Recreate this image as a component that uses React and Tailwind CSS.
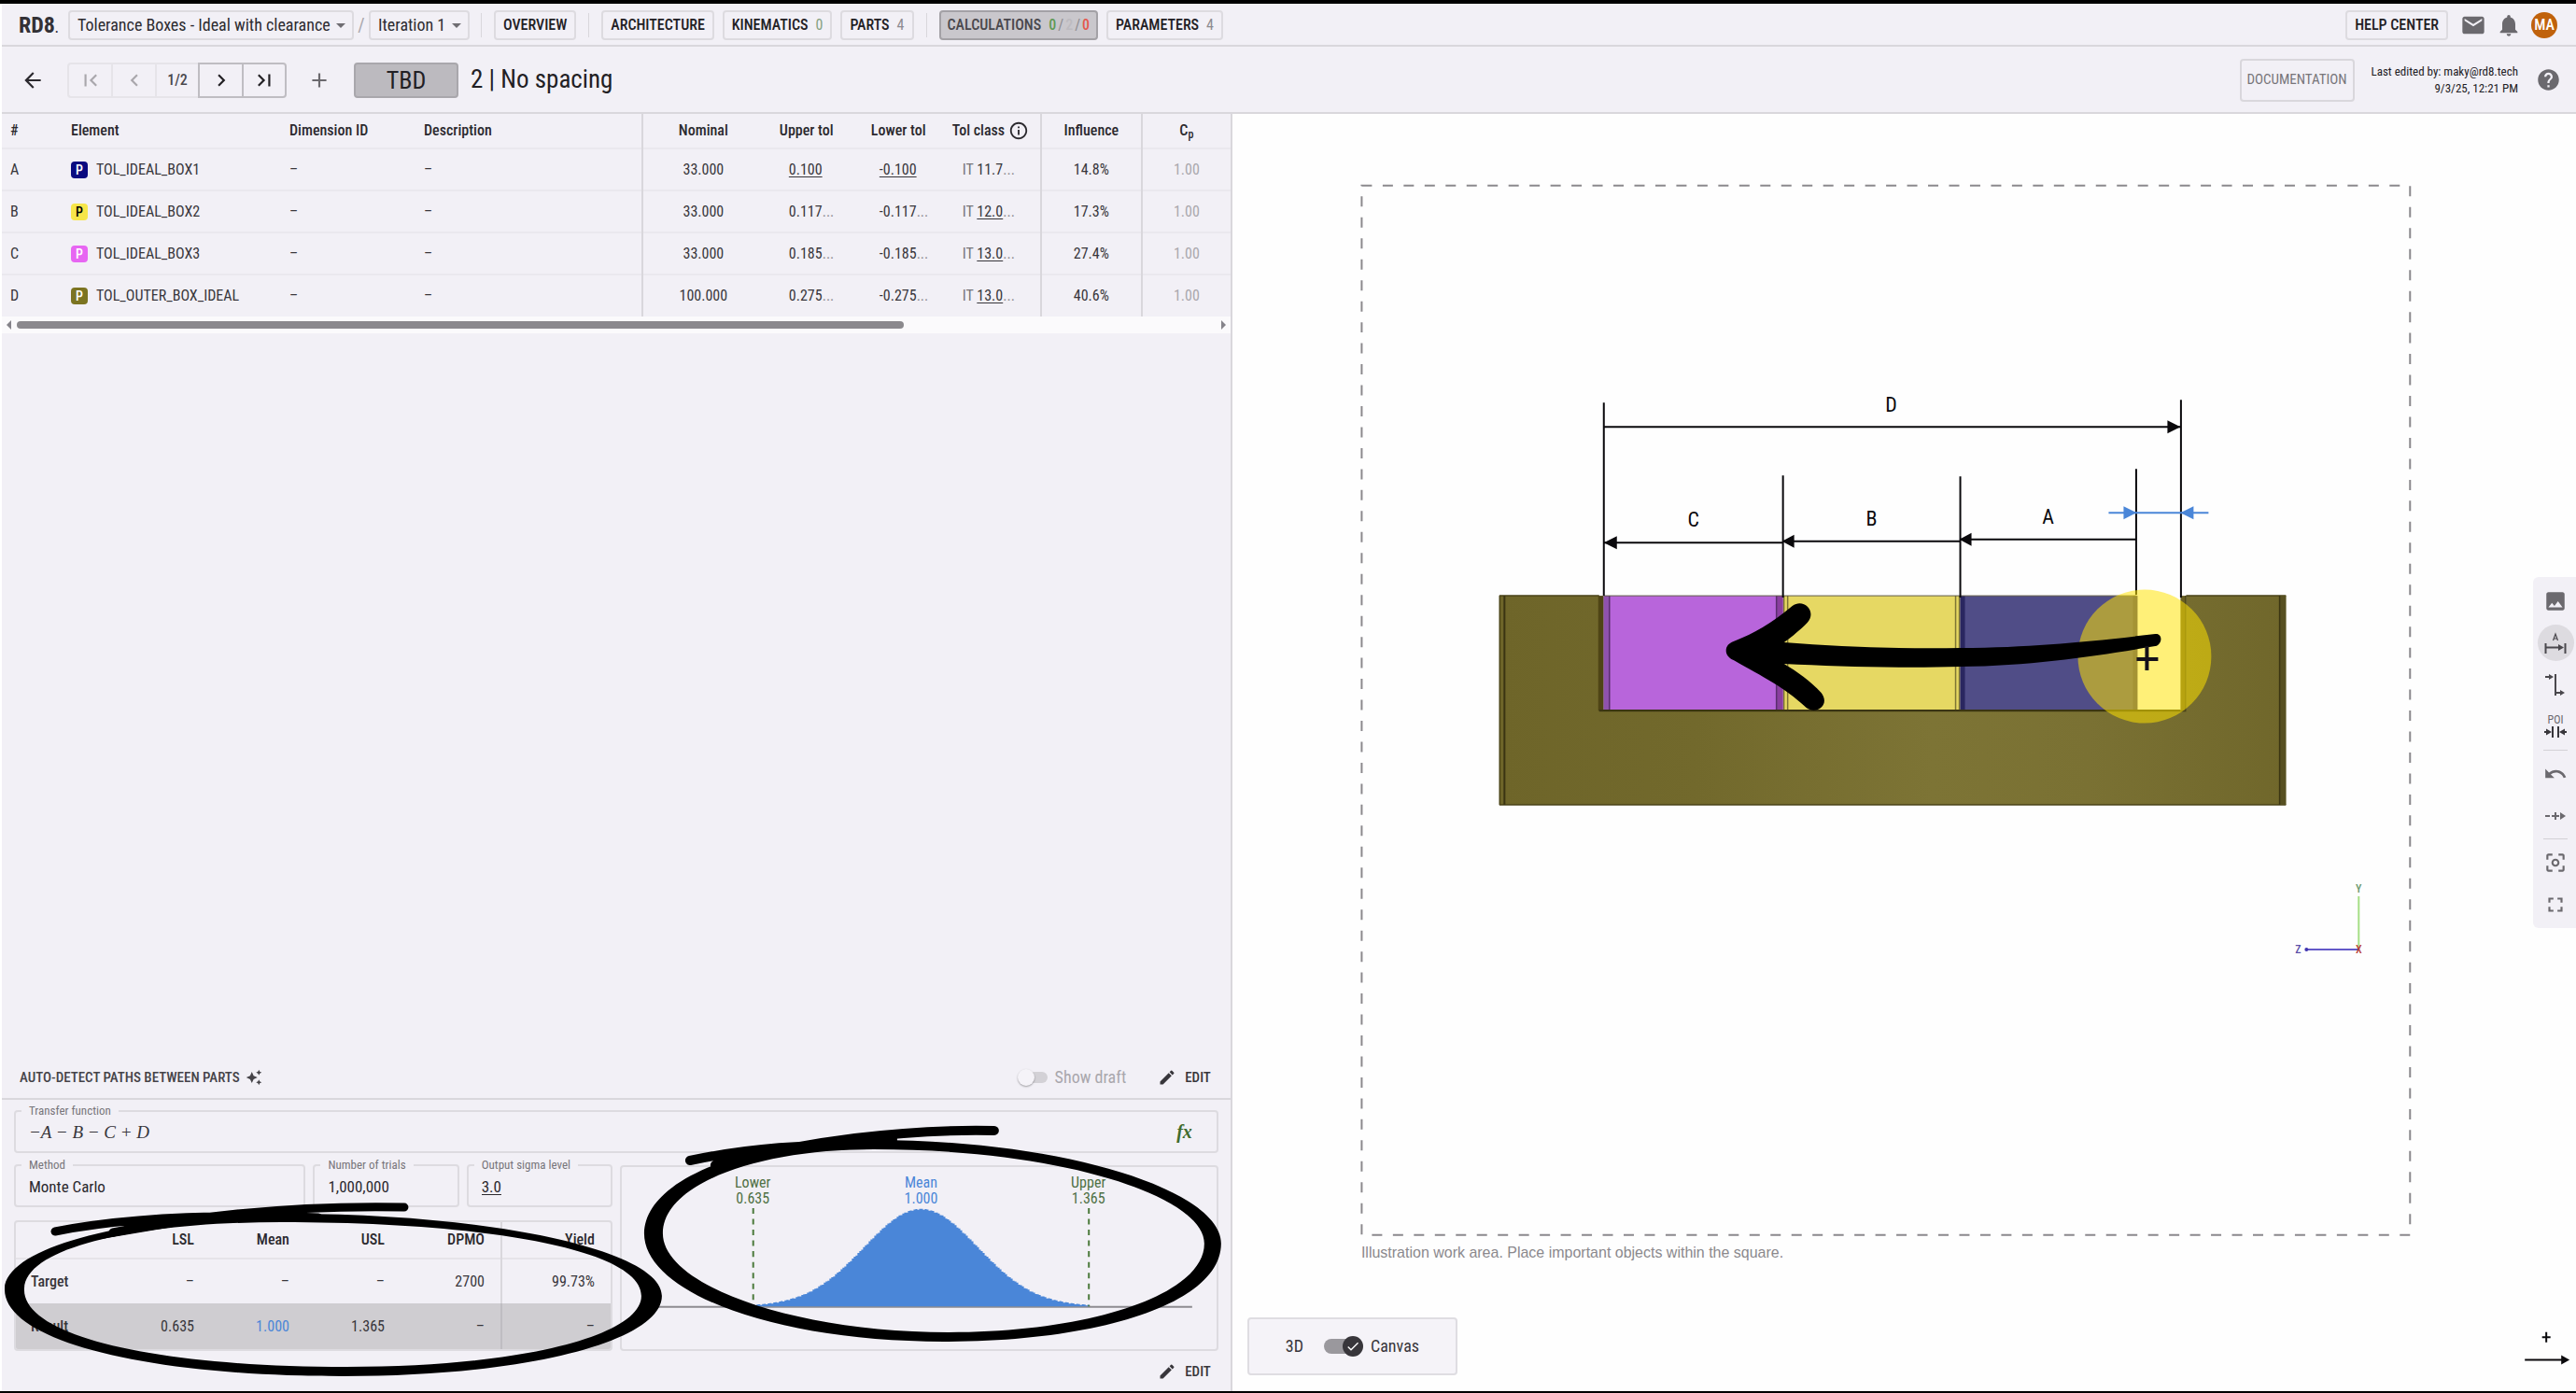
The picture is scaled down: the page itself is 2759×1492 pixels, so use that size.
import {
  MdAdd, MdArrowBack, MdArrowDropDown, MdArrowLeft, MdArrowRight, MdAutoAwesome, MdCenterFocusWeak, MdCheck, MdChevronLeft,
  MdChevronRight, MdEdit, MdEmail, MdFirstPage, MdFullscreen, MdHelp, MdImage, MdInfoOutline, MdLastPage, MdNotifications, MdUndo,
} from "react-icons/md";

const rows = [
  { id: "A", color: "bg-[#0b0b80] text-white", name: "TOL_IDEAL_BOX1", nominal: "33.000", upper: "0.100", lower: "-0.100", tol: "11.7", inf: "14.8%", manual: true },
  { id: "B", color: "bg-[#f7e64a] text-black", name: "TOL_IDEAL_BOX2", nominal: "33.000", upper: "0.117", lower: "-0.117", tol: "12.0", inf: "17.3%" },
  { id: "C", color: "bg-[#e766f2] text-white", name: "TOL_IDEAL_BOX3", nominal: "33.000", upper: "0.185", lower: "-0.185", tol: "13.0", inf: "27.4%" },
  { id: "D", color: "bg-[#7c7421] text-white", name: "TOL_OUTER_BOX_IDEAL", nominal: "100.000", upper: "0.275", lower: "-0.275", tol: "13.0", inf: "40.6%" },
];

function Divider() {
  return <span className="mx-1 h-[26px] w-px bg-[#d9d7dc]" />;
}

function NavButton({ children, active }) {
  return (
    <button
      className={
        active
          ? "flex h-8 items-center gap-2 whitespace-nowrap rounded border-2 border-[#a3a1a6] bg-[#c9c7cc] px-[7px] font-medium text-[#4a484d]"
          : "flex h-8 items-center gap-2 whitespace-nowrap rounded border-2 border-[#dddbe0] px-2 font-medium text-[#222024]"
      }
    >
      {children}
    </button>
  );
}

function Dropdown({ label, options, className }) {
  return (
    <div className={`relative flex h-8 items-center rounded border-2 border-[#dddbe0] text-[#2d2b30] ${className}`}>
      <select aria-label={label} className="h-full w-full appearance-none bg-transparent pl-2 text-lg leading-none outline-none">
        {options.map((o) => <option key={o}>{o}</option>)}
      </select>
      <MdArrowDropDown className="pointer-events-none absolute right-0 text-[24px] text-[#6f6d72]" />
    </div>
  );
}

function TopBar() {
  return (
    <header className="flex h-[46px] shrink-0 items-center border-b-2 border-[#d9d7dc] bg-[#f2f0f6] pt-px pr-5 pl-[18px] text-base">
      <a href="#home" className="w-[53px] text-2xl font-bold text-[#333136]">RD8<span className="text-xs">.</span></a>
      <Dropdown label="Project" options={["Tolerance Boxes - Ideal with clearance"]} className="w-[306px]" />
      <span className="w-4 text-center text-xl text-[#a9a7ac]">/</span>
      <Dropdown label="Iteration" options={["Iteration 1"]} className="w-[108px]" />
      <nav className="ml-2 flex items-center gap-[9px]">
        <Divider />
        <NavButton>OVERVIEW</NavButton>
        <Divider />
        <NavButton>ARCHITECTURE</NavButton>
        <NavButton>KINEMATICS <span className="font-normal text-[#86a081]">0</span></NavButton>
        <NavButton>PARTS <span className="font-normal text-[#8d8b90]">4</span></NavButton>
        <Divider />
        <NavButton active>
          CALCULATIONS
          <span className="flex gap-[2px]">
            <span className="text-[#5f9a55]">0</span><span className="font-normal text-[#8d8b90]">/</span>
            <span className="text-[#bdbbc0]">2</span><span className="font-normal text-[#8d8b90]">/</span>
            <span className="text-[#e4584e]">0</span>
          </span>
        </NavButton>
        <NavButton>PARAMETERS <span className="font-normal text-[#8d8b90]">4</span></NavButton>
      </nav>
      <div className="ml-auto flex items-center">
        <NavButton>HELP CENTER</NavButton>
        <button aria-label="Messages" className="ml-[13px] text-[28px] text-[#6b696e]"><MdEmail /></button>
        <button aria-label="Notifications" className="ml-[10px] text-[28px] text-[#6b696e]"><MdNotifications /></button>
        <button className="ml-[10px] size-7 rounded-full bg-[#c0620c] text-base font-medium text-white">MA</button>
      </div>
    </header>
  );
}

function Toolbar() {
  return (
    <div className="flex h-[72px] shrink-0 items-center border-b-2 border-[#d9d7dc] bg-[#f2f0f6] pt-px pr-4 pl-5">
      <button aria-label="Back" className="text-[26px] text-[#2b292e]"><MdArrowBack /></button>
      <div className="ml-6 flex h-[38px] items-stretch text-[26px] text-[#a9a7ac]">
        <button aria-label="First" disabled className="flex w-[47px] items-center justify-center rounded-l border-2 border-r-0 border-[#e6e4e9]"><MdFirstPage /></button>
        <button aria-label="Previous" disabled className="flex w-[47px] items-center justify-center border-2 border-r-0 border-[#e6e4e9]"><MdChevronLeft /></button>
        <span className="flex w-[46px] items-center justify-center border-2 border-r-0 border-[#e6e4e9] text-base font-medium text-[#4a484d]">1/2</span>
        <button aria-label="Next" className="flex w-[47px] items-center justify-center border-2 border-r-0 border-[#bfbdc2] text-[#222024]"><MdChevronRight /></button>
        <button aria-label="Last" className="flex w-[48px] items-center justify-center rounded-r border-2 border-[#bfbdc2] text-[#222024]"><MdLastPage /></button>
      </div>
      <button aria-label="Add" className="ml-[22px] text-[26px] text-[#6b696e]"><MdAdd /></button>
      <button className="ml-6 h-[38px] w-[112px] rounded border-2 border-[#a9a7ac] bg-[#bcbabf] text-[26px] leading-none text-[#222024]">TBD</button>
      <h1 className="ml-[13px] text-[27px] text-[#222024]">2 | No spacing</h1>
      <button className="ml-auto h-[46px] w-[123px] rounded border-2 border-[#d9d7dc] text-[15px] text-[#77757a]">DOCUMENTATION</button>
      <p className="ml-[18px] text-right text-[13px] leading-[18px] text-[#222024]">Last edited by: maky@rd8.tech<br />9/3/25, 12:21 PM</p>
      <button aria-label="Help" className="ml-[19px] text-[27px] text-[#6b696e]"><MdHelp /></button>
    </div>
  );
}

function Ellipsis() {
  return <span className="text-[#8d8b90]">...</span>;
}

function ElementsTable() {
  return (
    <table className="w-full table-fixed border-collapse text-base text-[#38363b]">
      <colgroup>
        <col className="w-[74px]" /><col className="w-[234px]" /><col className="w-[144px]" /><col /><col className="w-[130px]" />
        <col className="w-[97px]" /><col className="w-[94px]" /><col className="w-[106px]" /><col className="w-[108px]" /><col className="w-[95px]" />
      </colgroup>
      <thead>
        <tr className="h-[37px] border-b-2 border-[#eae8ee] text-left text-[#2b292e] [&>th]:font-medium">
          <th className="pl-[9px]">#</th><th>Element</th><th>Dimension ID</th><th>Description</th>
          <th className="border-l-2 border-[#d9d7dc] text-center">Nominal</th>
          <th className="pl-[17px]">Upper tol</th><th className="pl-[18px]">Lower tol</th>
          <th className="pl-[11px]"><span className="flex items-center gap-1 whitespace-nowrap">Tol class <MdInfoOutline className="text-[22px]" /></span></th>
          <th className="border-x-2 border-[#d9d7dc] text-center">Influence</th>
          <th className="text-center">C<sub>p</sub></th>
        </tr>
      </thead>
      <tbody>
        {rows.map((r) => (
          <tr key={r.id} className="h-[45px] border-b-2 border-[#eae8ee] last:border-b-0">
            <td className="pl-[9px]">{r.id}</td>
            <td>
              <span className="flex items-center gap-[9px]">
                <span className={`flex h-[18px] w-[18px] items-center justify-center rounded text-sm font-medium ${r.color}`}>P</span>{r.name}
              </span>
            </td>
            <td>–</td><td>–</td>
            <td className="border-l-2 border-[#d9d7dc] text-center">{r.nominal}</td>
            <td className="pl-[27px]">{r.manual ? <u className="underline-offset-2">{r.upper}</u> : <>{r.upper}<Ellipsis /></>}</td>
            <td className="pl-[27px]">{r.manual ? <u className="underline-offset-2">{r.lower}</u> : <>{r.lower}<Ellipsis /></>}</td>
            <td className="pl-[22px]">
              <span className="text-[#77757a]">IT </span>{r.manual ? r.tol : <u className="underline-offset-2">{r.tol}</u>}<Ellipsis />
            </td>
            <td className="border-x-2 border-[#d9d7dc] text-center">{r.inf}</td>
            <td className="text-center text-[#a9a7ac]">1.00</td>
          </tr>
        ))}
      </tbody>
    </table>
  );
}

function ScrollBar() {
  return (
    <div className="flex h-[18px] items-center bg-[#fbfafc] text-[#85838a]">
      <MdArrowLeft className="-mx-1 shrink-0 text-2xl" />
      <div className="flex-1"><div className="h-2 w-[74%] rounded-full bg-[#8b898d]" /></div>
      <MdArrowRight className="-mx-1 shrink-0 text-2xl" />
    </div>
  );
}

function Field({ id, label, value, className }) {
  return (
    <fieldset className="min-w-0 rounded border-2 border-[#dddbe0] px-[6px]">
      <legend className="px-2 text-[13px] leading-4 text-[#77757a]"><label htmlFor={id}>{label}</label></legend>
      <input id={id} readOnly value={value} className={`mb-[5px] block h-[30px] w-full bg-transparent px-2 outline-none ${className}`} />
    </fieldset>
  );
}

function ResultsTable() {
  return (
    <div className="mt-[14px] overflow-hidden rounded border-2 border-[#dddbe0]">
      <table className="w-full table-fixed border-collapse text-base text-[#38363b] [&_td]:text-right [&_th]:text-right [&_th]:font-medium">
        <colgroup>
          <col /><col className="w-[102px]" /><col className="w-[102px]" /><col className="w-[102px]" /><col className="w-[108px]" /><col className="w-[117px]" />
        </colgroup>
        <thead>
          <tr className="h-[39px] border-b-2 border-[#e6e4e9] text-[#2b292e] [&>th]:pr-[17px]">
            <th /><th>LSL</th><th>Mean</th><th>USL</th><th>DPMO</th><th className="border-l-2 border-[#d9d7dc]">Yield</th>
          </tr>
        </thead>
        <tbody className="[&_td]:pr-[17px]">
          <tr className="h-12">
            <th className="pl-4 text-left!">Target</th><td>–</td><td>–</td><td>–</td><td>2700</td><td className="border-l-2 border-[#d9d7dc]">99.73%</td>
          </tr>
          <tr className="h-[49px] bg-[#cfcdd1]">
            <th className="pl-4 text-left!">Result</th><td>0.635</td><td className="text-[#4a86d8]">1.000</td><td>1.365</td><td>–</td>
            <td className="border-l-2 border-[#bfbdc2]">–</td>
          </tr>
        </tbody>
      </table>
    </div>
  );
}

function bell() {
  let d = "M142 151";
  for (let x = 142; x < 502; x += 2) {
    const z = (x + 1 - 322) / 61;
    const y = 151 - 104 * Math.exp((-z * z) / 2) + (x % 3 === 0 ? 0.5 : -0.3);
    d += `V${y.toFixed(1)}H${x + 2}`;
  }
  return d + "V151Z";
}

function Histogram() {
  return (
    <div className="mt-2 rounded border-2 border-[#dddbe0]">
      <svg viewBox="2 2 636 194" className="block w-full text-base" role="img" aria-label="Result distribution">
        <path d="M28 151.500H612" stroke="#8d8b90" strokeWidth="2" />
        <path d={bell()} fill="#4a86d8" />
        <path d="M142.500 46V151M501.500 46V151" stroke="#4c7a3c" strokeWidth="2" strokeDasharray="6 5.500" />
        <g textAnchor="middle" fill="#4f7044">
          <text x="142" y="24">Lower</text><text x="142" y="41">0.635</text>
          <text x="501" y="24">Upper</text><text x="501" y="41">1.365</text>
        </g>
        <g textAnchor="middle" fill="#4a86d8"><text x="322" y="24">Mean</text><text x="322" y="41">1.000</text></g>
      </svg>
    </div>
  );
}

/* Hand-drawn highlight loops over the results table and the histogram. */
function Scribbles() {
  return (
    <svg viewBox="1 1178 1316 312" className="pointer-events-none absolute inset-0 h-full w-full overflow-visible" aria-hidden="true">
      <path fillRule="evenodd" d="M4 1380C6 1335 140 1301 310 1300C520 1300 708 1338 708 1388C708 1435 570 1474 366 1474C150 1474 2 1435 4 1380ZM25 1380C27 1335 150 1309 300 1309C520 1309 686 1338 686 1388C686 1430 560 1464 370 1464C160 1464 22 1430 25 1380Z" />
      <path d="M432 1293C330 1291 220 1300 120 1320M58 1319C130 1305 230 1300 340 1304" fill="none" stroke="#000" strokeWidth="9" strokeLinecap="round" />
      <path d="M90 1330C140 1310 230 1297 316 1293V1305L220 1308Z" />
      <path fillRule="evenodd" d="M689 1321C690 1262 800 1221 935 1221C1140 1221 1307 1275 1307 1332C1307 1395 1180 1437 1010 1437C830 1437 689 1385 689 1321ZM709 1321C709 1377 850 1427 1015 1427C1170 1427 1289 1386 1289 1332C1289 1282 1140 1231 935 1231C810 1231 709 1268 709 1321Z" />
      <path d="M1064 1211C970 1209 860 1222 765 1248M738 1243C800 1230 860 1225 950 1226" fill="none" stroke="#000" strokeWidth="10" strokeLinecap="round" />
      <path d="M740 1262C790 1236 880 1219 960 1213V1227L850 1234Z" />
    </svg>
  );
}

function EditButton() {
  return (
    <button className="flex items-center gap-[9px] text-[15px] font-medium text-[#38363b]"><MdEdit className="text-xl" />EDIT</button>
  );
}

function LeftPanel() {
  return (
    <section className="flex w-[47.8%] shrink-0 flex-col border-r-2 border-[#d9d7dc] bg-[#f2f0f6]">
      <ElementsTable />
      <ScrollBar />
      <div className="mt-auto flex h-[48px] items-center border-b-2 border-[#d9d7dc] pt-[2px] pr-[21px] pl-[19px]">
        <button className="flex items-center gap-[6px] text-[15px] font-medium text-[#454348]">
          AUTO-DETECT PATHS BETWEEN PARTS <MdAutoAwesome className="text-lg" />
        </button>
        <label className="ml-auto flex items-center gap-2 text-lg text-[#a9a7ac]">
          <input type="checkbox" role="switch" className="peer sr-only" />
          <span className="relative flex h-4 w-8 items-center justify-end">
            <span className="h-3 w-5 rounded-full bg-[#d3d1d6]" />
            <span className="absolute left-0 size-[18px] rounded-full bg-[#f5f3f8] shadow-[0_1px_2px_rgba(0,0,0,0.35)]" />
          </span>
          Show draft
        </label>
        <div className="ml-[34px]"><EditButton /></div>
      </div>
      <div className="relative h-[312px] pt-1 pr-[13px] pl-[13px]">
        <div className="relative">
          <Field id="transfer" label="Transfer function" value="−A − B − C + D" className="font-['Liberation_Serif',serif] text-[19px] text-[#38363b] italic" />
          <span className="absolute top-[18px] right-7 font-['Liberation_Serif',serif] text-xl leading-6 font-bold text-[#3f6b2c] italic">fx</span>
        </div>
        <div className="mt-[5px] grid grid-cols-2 gap-2">
          <div>
            <div className="grid grid-cols-[2fr_1fr_1fr] gap-2">
              <Field id="method" label="Method" value="Monte Carlo" className="text-[17px] text-[#2b292e]" />
              <Field id="trials" label="Number of trials" value="1,000,000" className="text-[17px] text-[#2b292e]" />
              <Field id="sigma" label="Output sigma level" value="3.0" className="text-[17px] leading-[30px] text-[#2b292e] underline underline-offset-2" />
            </div>
            <ResultsTable />
          </div>
          <Histogram />
        </div>
        <div className="flex h-11 items-center justify-end pr-2"><EditButton /></div>
        <Scribbles />
      </div>
    </section>
  );
}

function Drawing() {
  return (
    <svg viewBox="1320 122 1440 1368" className="absolute inset-0 h-full w-full" role="img" aria-label="Tolerance chain drawing">
      <defs>
        <linearGradient id="olive" x1="0" x2="1" y1="0" y2="0">
          <stop offset="0" stopColor="#6e6529" /><stop offset="0.25" stopColor="#72692c" /><stop offset="0.55" stopColor="#7d7435" /><stop offset="0.75" stopColor="#7a7133" /><stop offset="1" stopColor="#70672b" />
        </linearGradient>
      </defs>
      <rect x="1458.500" y="198.500" width="1123.500" height="1124.500" fill="none" stroke="#8b898d" strokeWidth="2" strokeDasharray="11 11.480" />
      <text x="1458" y="1347" fontSize="16" fill="#8b898d" className="font-['Liberation_Sans',sans-serif]">Illustration work area. Place important objects within the square.</text>

      {/* outer box and the three inner boxes */}
      <path d="M1606 638H1713V761H2342V638H2449V862H1606Z" fill="url(#olive)" />
      <path d="M1606 638H1713M2342 638H2449M1606 862H2449M1606.500 638V862M1713 761.500H2342" fill="none" stroke="#4a4318" strokeWidth="1.500" />
      <path d="M1611.500 638V862M2442.500 638V862" stroke="#3b3512" strokeWidth="2" />
      <rect x="2443" y="638" width="6" height="224" fill="#575021" />
      <rect x="1712" y="638" width="6" height="123" fill="#4e4415" />
      <rect x="2336" y="638" width="6" height="123" fill="#665d22" />
      <path d="M2341.500 638V761" stroke="#4a4318" strokeWidth="1.500" />
      <rect x="1718" y="638" width="192" height="123" fill="#b865db" />
      <rect x="1718" y="638" width="6" height="123" fill="#8f52ad" />
      <rect x="1903" y="638" width="7" height="123" fill="#8a3f9f" />
      <path d="M1724 638V761M1903 638V761" stroke="#5a2f6e" strokeWidth="1.500" />
      <rect x="1911" y="638" width="189" height="123" fill="#e6d863" />
      <path d="M1911 638V761M1915 638V761M2095 638V761M2099 638V761" stroke="#7d7434" strokeWidth="1.500" />
      <rect x="2100" y="638" width="189" height="123" fill="#504d87" />
      <rect x="2100" y="638" width="5" height="123" fill="#2a2760" />
      <rect x="2285" y="638" width="5" height="123" fill="#3e3b70" />
      <path d="M1713 761H2336" stroke="#3b3512" strokeWidth="2" />
      <path d="M1718 638H2289" stroke="#5f5a45" strokeWidth="1" />

      {/* dimensions */}
      <g stroke="#0a090c" strokeWidth="2" fill="none">
        <path d="M1718 431V638M2336.500 428V640M1910 509V640M2100 510V640M2288.500 502V637" />
        <path d="M1718 457H2336M1718 581H1910M1910 579.500H2100M2100 577.500H2288" />
      </g>
      <g fill="#0a090c">
        <path d="M2336 457L2322 450V464ZM1718 581L1732 574V588ZM1909 579.500L1922 572.500V586.500ZM2099 577.500L2112 570.500V584.500Z" />
        <g fontSize="22" textAnchor="middle">
          <text x="2026" y="441">D</text><text x="1814" y="564">C</text><text x="2005" y="563">B</text><text x="2194" y="561">A</text>
        </g>
      </g>
      <path d="M2259 549H2366" stroke="#4a86d8" strokeWidth="2" />
      <path d="M2289 549L2275 542V556ZM2336 549L2350 542V556Z" fill="#4a86d8" />

      {/* pointer highlight and sketched arrow */}
      <circle cx="2297.500" cy="703" r="71.500" fill="#ffe200" fillOpacity="0.53" />
      <path d="M1849 697C1849 692 1852 689 1857 687C1880 678 1897 668 1920 649C1932 640 1947 655 1936 667C1928 675 1921 681 1911 688C1975 693 2040 695 2100 694C2180 693 2230 688 2309 679C2317 678 2317 690 2309 692C2250 702 2180 713 2100 714C2040 716 1970 714 1911 711C1925 719 1940 730 1951 742C1961 755 1946 766 1935 758C1910 735 1890 726 1857 707C1852 705 1849 701 1849 697Z" fill="#000" />
      <path d="M2300 692V718M2289 706H2312" stroke="#14101a" strokeWidth="4" />

      {/* axis triad */}
      <path d="M2527 960V1016" stroke="#a6df86" strokeWidth="2" />
      <path d="M2470 1017H2527" stroke="#6459c8" strokeWidth="2" />
      <circle cx="2471" cy="1017" r="2" fill="#4034b0" />
      <g fontSize="12" textAnchor="middle" fontWeight="500">
        <text x="2527" y="956" fill="#6c9a70">Y</text><text x="2462" y="1021" fill="#5c50a8">Z</text><text x="2527" y="1021" fill="#b8413a">X</text>
      </g>

      {/* positive direction marker */}
      <path d="M2728 1427V1438M2723.500 1432.500H2732.500M2705 1457H2746" stroke="#0a090c" strokeWidth="2" />
      <path d="M2753 1457L2744 1452V1462Z" fill="#0a090c" />
    </svg>
  );
}

function ToolButton({ label, active, children }) {
  return (
    <button aria-label={label} className="flex h-[45px] w-full items-center justify-center">
      <span className={active ? "flex size-[39px] items-center justify-center rounded-full bg-[#dddbe0]" : "flex size-[39px] items-center justify-center"}>{children}</span>
    </button>
  );
}

function SideTools() {
  return (
    <div className="absolute top-[496px] right-0 flex w-[46px] flex-col items-center rounded-l-md bg-[#f2f0f6] py-[3px] pl-[2px] text-[26px] text-[#6b696e]">
      <ToolButton label="Image"><MdImage /></ToolButton>
      <ToolButton label="Dimension" active>
        <svg viewBox="0 0 24 26" className="h-[26px] w-6" fill="none" stroke="#4a484d" strokeWidth="2">
          <path d="M1.500 13V24M22.500 13V24M2 17.500H17" /><path d="M15 14L21 17.500L15 21Z" fill="#4a484d" stroke="none" />
          <path d="M9.500 10L12 3L14.500 10M10.300 8H13.700" strokeWidth="1.200" />
        </svg>
      </ToolButton>
      <ToolButton label="Offset">
        <svg viewBox="0 0 24 26" className="h-[26px] w-6" fill="none" stroke="#4a484d" strokeWidth="2">
          <path d="M12 1V24M1 4H6M13 21H18" /><path d="M5 1L10 4L5 7ZM17 18L22 21L17 24Z" fill="#4a484d" stroke="none" />
        </svg>
      </ToolButton>
      <ToolButton label="Point of interest">
        <span className="flex flex-col items-center">
          <span className="text-[12px] leading-[11px]">POI</span>
          <svg viewBox="0 0 26 14" className="h-[14px] w-[26px]" fill="none" stroke="#38363b" strokeWidth="2">
            <path d="M10 1V13M16 1V13M1 7H5M21 7H25" /><path d="M3 3.500L9 7L3 10.500ZM23 3.500L17 7L23 10.500Z" fill="#38363b" stroke="none" />
          </svg>
        </span>
      </ToolButton>
      <hr className="my-[2px] w-[26px] border-[#d3d1d6]" />
      <ToolButton label="Undo"><MdUndo /></ToolButton>
      <ToolButton label="Direction">
        <svg viewBox="0 0 24 10" className="h-[10px] w-6" fill="none" stroke="#6b696e" strokeWidth="2">
          <path d="M1 5H6M8 5H16M12 1V9" /><path d="M17 1L23 5L17 9Z" fill="#6b696e" stroke="none" />
        </svg>
      </ToolButton>
      <hr className="my-[2px] w-[26px] border-[#d3d1d6]" />
      <ToolButton label="Center"><MdCenterFocusWeak /></ToolButton>
      <ToolButton label="Fullscreen"><MdFullscreen /></ToolButton>
    </div>
  );
}

function ViewSwitch() {
  return (
    <label className="absolute bottom-[17px] left-4 flex h-[62px] items-center rounded border-2 border-[#dfdde2] bg-[#f5f3f8] px-[39px] text-lg text-[#38363b]">
      3D
      <input type="checkbox" role="switch" defaultChecked className="peer sr-only" />
      <span className="relative mr-2 ml-[22px] flex h-[22px] w-[42px] items-center">
        <span className="h-4 w-8 rounded-full bg-[#9a989d]" />
        <span className="absolute right-0 flex size-[22px] items-center justify-center rounded-full bg-[#38363b] text-white"><MdCheck className="text-base" /></span>
      </span>
      Canvas
    </label>
  );
}

export default function App() {
  return (
    <div className="flex h-screen flex-col border-t-4 border-b-2 border-black bg-white pl-[2px] font-['Roboto_Condensed',Roboto,sans-serif]">
      <TopBar />
      <Toolbar />
      <main className="flex min-h-0 flex-1">
        <LeftPanel />
        <section className="relative flex-1 bg-[#fefefe]">
          <Drawing />
          <ViewSwitch />
          <SideTools />
        </section>
      </main>
    </div>
  );
}
